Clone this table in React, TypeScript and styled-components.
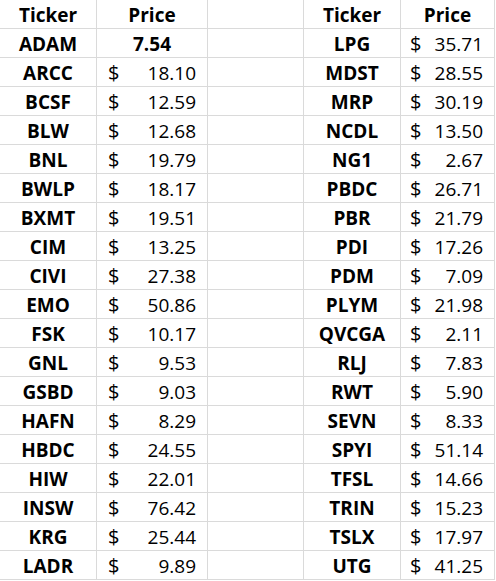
import { Fragment } from 'react';
import styled, { createGlobalStyle } from 'styled-components';

const GlobalStyle = createGlobalStyle`
  html, body {
    margin: 0;
    padding: 0;
    background: #ffffff;
  }
  body {
    font-family: 'Open Sans', 'Liberation Sans', sans-serif;
    color: #000000;
  }
`;

const Sheet = styled.div`
  display: grid;
  grid-template-columns: 97px 111px 96px 97px 94px;
  grid-auto-rows: 29px;
  width: 495px;
`;

const Cell = styled.div<{ $bold?: boolean; $center?: boolean }>`
  box-sizing: border-box;
  border-right: 1px solid #dadada;
  border-bottom: 1px solid #dadada;
  padding-top: 1px;
  font-size: 19px;
  line-height: 28px;
  font-weight: ${(p) => (p.$bold ? 700 : 400)};
  text-align: ${(p) => (p.$center ? 'center' : 'left')};
  white-space: nowrap;
  overflow: hidden;
`;

const PriceCell = styled(Cell)<{ $lead: number }>`
  display: flex;
  justify-content: space-between;
  padding-left: ${(p) => p.$lead}px;
  padding-right: 11px;
`;

const Dollar = styled.span`
  font-size: 20px;
`;

type Row = [string, string];

const left: Row[] = [
  ['ARCC', '18.10'],
  ['BCSF', '12.59'],
  ['BLW', '12.68'],
  ['BNL', '19.79'],
  ['BWLP', '18.17'],
  ['BXMT', '19.51'],
  ['CIM', '13.25'],
  ['CIVI', '27.38'],
  ['EMO', '50.86'],
  ['FSK', '10.17'],
  ['GNL', '9.53'],
  ['GSBD', '9.03'],
  ['HAFN', '8.29'],
  ['HBDC', '24.55'],
  ['HIW', '22.01'],
  ['INSW', '76.42'],
  ['KRG', '25.44'],
  ['LADR', '9.89'],
];

const right: Row[] = [
  ['LPG', '35.71'],
  ['MDST', '28.55'],
  ['MRP', '30.19'],
  ['NCDL', '13.50'],
  ['NG1', '2.67'],
  ['PBDC', '26.71'],
  ['PBR', '21.79'],
  ['PDI', '17.26'],
  ['PDM', '7.09'],
  ['PLYM', '21.98'],
  ['QVCGA', '2.11'],
  ['RLJ', '7.83'],
  ['RWT', '5.90'],
  ['SEVN', '8.33'],
  ['SPYI', '51.14'],
  ['TFSL', '14.66'],
  ['TRIN', '15.23'],
  ['TSLX', '17.97'],
  ['UTG', '41.25'],
];

const Price = ({ value, lead }: { value: string; lead: number }) => (
  <PriceCell $lead={lead}>
    <Dollar>$</Dollar>
    <span>{value}</span>
  </PriceCell>
);

export default function App() {
  return (
    <>
      <GlobalStyle />
      <Sheet>
        <Cell $bold $center>Ticker</Cell>
        <Cell $bold $center>Price</Cell>
        <Cell />
        <Cell $bold $center>Ticker</Cell>
        <Cell $bold $center>Price</Cell>
        {right.map((r, i) => {
          const l = i === 0 ? null : left[i - 1];
          return (
            <Fragment key={r[0]}>
              <Cell $bold $center>{l ? l[0] : 'ADAM'}</Cell>
              {l ? <Price value={l[1]} lead={11} /> : <Cell $bold $center>7.54</Cell>}
              <Cell />
              <Cell $bold $center>{r[0]}</Cell>
              <Price value={r[1]} lead={9} />
            </Fragment>
          );
        })}
      </Sheet>
    </>
  );
}
